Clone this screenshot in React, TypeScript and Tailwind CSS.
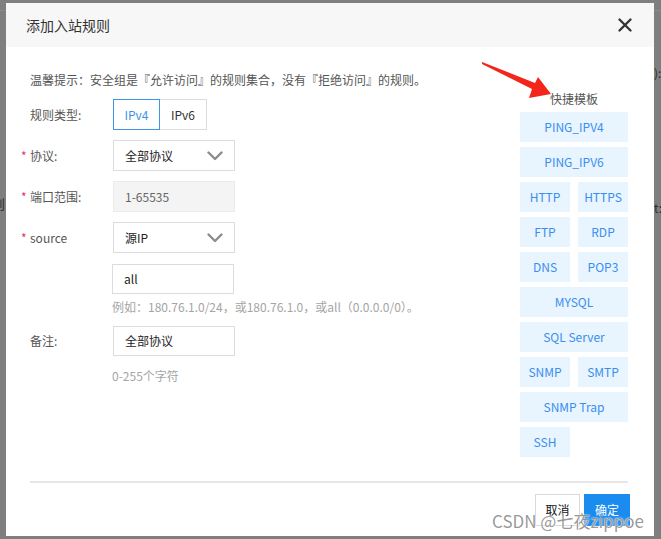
import React from "react";

const font = { fontFamily: '"Noto Sans CJK SC", "Noto Sans", sans-serif' };

function Chevron() {
  return (
    <svg width="16" height="10" viewBox="0 0 16 10" className="shrink-0">
      <path d="M1.5 1.5 L8 8 L14.5 1.5" fill="none" stroke="#8c8c8c" strokeWidth="2.4" strokeLinecap="round" strokeLinejoin="round" />
    </svg>
  );
}

function Label({ text, required }: { text: string; required?: boolean }) {
  return (
    <div className="relative w-[83px] shrink-0 text-[12px] text-[#555] leading-[18px]">
      {required && <span className="absolute -left-[9px] top-0 text-[#e5316d]">*</span>}
      {text}
    </div>
  );
}

const templates: { name: string; full?: boolean }[] = [
  { name: "PING_IPV4", full: true },
  { name: "PING_IPV6", full: true },
  { name: "HTTP" },
  { name: "HTTPS" },
  { name: "FTP" },
  { name: "RDP" },
  { name: "DNS" },
  { name: "POP3" },
  { name: "MYSQL", full: true },
  { name: "SQL Server", full: true },
  { name: "SNMP" },
  { name: "SMTP" },
  { name: "SNMP Trap", full: true },
  { name: "SSH" },
];

export default function App() {
  return (
    <div className="relative w-[661px] h-[539px] bg-[#7f7f7f] overflow-hidden" style={font}>
      {/* backdrop fragments of the page below */}
      <div className="absolute left-[-8px] top-[195px] text-[13px] text-[#2c2c2c] leading-[18px]">则</div>
      <div className="absolute left-[654px] top-[64px] text-[12px] text-[#2c2c2c] leading-[18px]">):</div>
      <div className="absolute left-[654px] top-[199px] text-[12px] text-[#2c2c2c] leading-[18px]">t:</div>
      <div className="absolute left-0 top-[10px] w-[6px] h-px bg-[#8a8a8a]" />
      <div className="absolute right-0 top-[10px] w-[7px] h-px bg-[#8a8a8a]" />

      {/* dialog */}
      <div className="absolute left-[6px] top-[3px] w-[648px] h-[533px] bg-white flex flex-col">
        <div className="h-[44px] shrink-0 bg-[#f7f7f7] flex items-center justify-between pl-[20px] pr-[22px]">
          <span className="text-[14px] text-[#333]">添加入站规则</span>
          <svg width="14" height="14" viewBox="0 0 14 14">
            <path d="M1.5 1.5 L12.5 12.5 M12.5 1.5 L1.5 12.5" stroke="#333" strokeWidth="2.3" strokeLinecap="round" />
          </svg>
        </div>

        <div className="pl-[24px] pr-[26px] pt-[24px] flex flex-col">
          <div className="flex">
            {/* left form */}
            <div className="flex-1 flex flex-col">
              <div className="text-[12px] leading-[18px] text-[#555]">
                温馨提示：安全组是『允许访问』的规则集合，没有『拒绝访问』的规则。
              </div>

              <div className="flex items-center mt-[10px]">
                <Label text="规则类型:" />
                <div className="flex">
                  <div className="w-[47px] h-[31px] border border-[#3d94ea] text-[#3d94ea] text-[12px] flex items-center justify-center">IPv4</div>
                  <div className="w-[47px] h-[31px] border border-l-0 border-[#dcdcdc] text-[#333] text-[12px] flex items-center justify-center">IPv6</div>
                </div>
              </div>

              <div className="flex items-center mt-[10px]">
                <Label text="协议:" required />
                <div className="w-[122px] h-[31px] border border-[#dcdcdc] flex items-center justify-between pl-[11px] pr-[11px] text-[12px] text-[#222]">
                  <span>全部协议</span>
                  <Chevron />
                </div>
              </div>

              <div className="flex items-center mt-[10px]">
                <Label text="端口范围:" required />
                <div className="w-[122px] h-[31px] border border-[#ebebeb] bg-[#f4f4f4] flex items-center pl-[11px] text-[12px] text-[#666]">
                  1-65535
                </div>
              </div>

              <div className="flex items-center mt-[10px]">
                <Label text="source" required />
                <div className="w-[122px] h-[31px] border border-[#dcdcdc] flex items-center justify-between pl-[11px] pr-[11px] text-[12px] text-[#222]">
                  <span>源IP</span>
                  <Chevron />
                </div>
              </div>

              <div className="flex items-center mt-[11px]">
                <div className="w-[82px] shrink-0" />
                <div className="w-[122px] h-[30px] border border-[#dcdcdc] flex items-center pl-[11px] text-[12px] text-[#222]">
                  all
                </div>
              </div>

              <div className="mt-[4px] pl-[82px] text-[12px] leading-[18px] text-[#a5a5a5]">
                例如：180.76.1.0/24，或180.76.1.0，或all（0.0.0.0/0）。
              </div>

              <div className="flex items-center mt-[10px]">
                <Label text="备注:" />
                <div className="w-[122px] h-[30px] border border-[#dcdcdc] flex items-center pl-[11px] text-[12px] text-[#222]">
                  全部协议
                </div>
              </div>

              <div className="mt-[11px] pl-[82px] text-[12px] leading-[18px] text-[#a5a5a5]">0-255个字符</div>
            </div>

            {/* right templates */}
            <div className="w-[108px] shrink-0 mt-[19px] flex flex-col">
              <div className="text-[12px] leading-[18px] text-[#555] text-center">快捷模板</div>
              <div className="mt-[4px] grid grid-cols-2 gap-x-[8px] gap-y-[5px]">
                {templates.map((t) => (
                  <div
                    key={t.name}
                    className={
                      (t.full ? "col-span-2 " : "") +
                      "h-[30px] bg-[#e8f4fe] text-[#3a8ef0] text-[12px] flex items-center justify-center"
                    }
                  >
                    {t.name}
                  </div>
                ))}
              </div>
            </div>
          </div>

          <div className="mt-[24px] h-[2px] bg-[#e6e6e6]" />

          <div className="mt-[11px] -mr-[2px] flex justify-end gap-[4px]">
            <div className="w-[45px] h-[32px] border border-[#d9d9d9] bg-white text-[12px] text-[#111] flex items-center justify-center">取消</div>
            <div className="w-[46px] h-[32px] bg-[#1a8cf0] text-[12px] text-white flex items-center justify-center">确定</div>
          </div>
        </div>
      </div>

      {/* red arrow annotation */}
      <svg className="absolute left-0 top-0 pointer-events-none" width="661" height="539">
        <polygon
          points="482,62 535,83 538,77 551,94 529,98 532,89 482,64"
          fill="#f2261b"
        />
      </svg>

      {/* watermark */}
      <div
        className="absolute left-[492px] top-[509px] text-[17px] leading-[24px] text-[#6b6b6b]/70 whitespace-nowrap"
        style={{ textShadow: "0 0 2px #fff, 0 0 1px #fff" }}
      >
        CSDN @七夜zippoe
      </div>
    </div>
  );
}
